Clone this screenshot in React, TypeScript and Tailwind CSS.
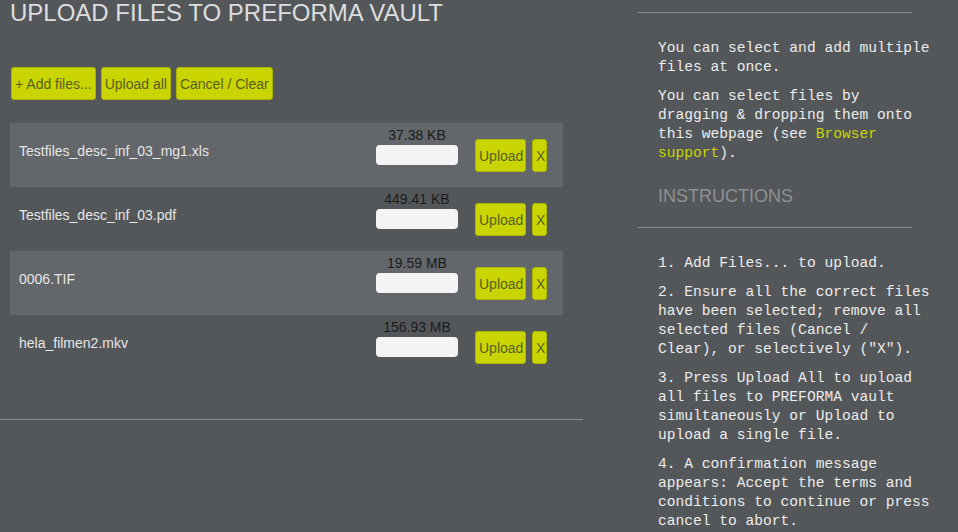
import React from 'react';

interface QueuedFile {
    name: string;
    size: string;
}

const files: QueuedFile[] = [
    { name: 'Testfiles_desc_inf_03_mg1.xls', size: '37.38 KB' },
    { name: 'Testfiles_desc_inf_03.pdf', size: '449.41 KB' },
    { name: '0006.TIF', size: '19.59 MB' },
    { name: 'hela_filmen2.mkv', size: '156.93 MB' },
];

const limeBtn =
    'h-[33px] rounded-[3px] border border-[#aab400] bg-[#c9d400] px-[3px] text-[14px] leading-none text-[#5a5f24]';

const FileRow: React.FC<{ file: QueuedFile; shaded: boolean }> = ({ file, shaded }) => (
    <div className={`flex h-[64px] items-start ${shaded ? 'bg-[#63666a]' : ''}`}>
        <div className="mt-[20px] flex-1 pl-[9px] text-[14px] leading-[16px] text-[#e6e6e6]">{file.name}</div>
        <div className="mt-[4px] flex w-[82px] flex-col items-center">
            <span className="whitespace-nowrap text-[14px] leading-[16px] text-[#1c1c1c]">{file.size}</span>
            <div className="mt-[2px] h-[20px] w-[82px] rounded-[4px] bg-[#f4f4f4]" />
        </div>
        <button className={`${limeBtn} ml-[17px] mt-[16px] w-[51px]`}>Upload</button>
        <button className={`${limeBtn} ml-[6px] mr-[16px] mt-[16px] w-[15px] px-0`}>X</button>
    </div>
);

const mono = "font-['Liberation_Mono','DejaVu_Sans_Mono',monospace] text-[14.6px] leading-[19px] text-[#ececec]";

export default function App() {
    return (
        <div className="flex min-h-[532px] w-[958px] bg-[#54575a] font-['Liberation_Sans',Arial,sans-serif]">
            <div className="w-[583px] shrink-0">
                <h1 className="pl-[10px] text-[24px] leading-[26px] text-[#dedede]">UPLOAD FILES TO PREFORMA VAULT</h1>
                <div className="mt-[41px] flex gap-[5px] pl-[11px]">
                    <button className={limeBtn}>+ Add files...</button>
                    <button className={limeBtn}>Upload all</button>
                    <button className={limeBtn}>Cancel / Clear</button>
                </div>
                <div className="mt-[23px] ml-[10px] mr-[20px]">
                    {files.map((f, i) => (
                        <FileRow key={f.name} file={f} shaded={i % 2 === 0} />
                    ))}
                </div>
                <hr className="mt-[40px] border-0 border-t border-[#8c8f92]" />
            </div>

            <div className="ml-[55px] w-[320px] shrink-0 pt-[12px]">
                <hr className="w-[274px] border-0 border-t border-[#8c8f92]" />
                <div className={`w-[296px] pl-[20px] pt-[26px] ${mono}`}>
                    <p>You can select and add multiple files at once.</p>
                    <p className="mt-[10px]">
                        You can select files by dragging &amp; dropping them onto this webpage (see{' '}
                        <a className="text-[#c9d400]">Browser support</a>).
                    </p>
                </div>
                <h2 className="mt-[23px] pl-[20px] text-[18px] leading-[20px] text-[#8d9093]">INSTRUCTIONS</h2>
                <hr className="mt-[21px] w-[274px] border-0 border-t border-[#8c8f92]" />
                <div className={`w-[296px] space-y-[10px] pl-[20px] pt-[26px] ${mono}`}>
                    <p>1. Add Files... to upload.</p>
                    <p>2. Ensure all the correct files have been selected; remove all selected files (Cancel / Clear), or selectively ("X").</p>
                    <p>3. Press Upload All to upload all files to PREFORMA vault simultaneously or Upload to upload a single file.</p>
                    <p>4. A confirmation message appears: Accept the terms and conditions to continue or press cancel to abort.</p>
                </div>
            </div>
        </div>
    );
}
